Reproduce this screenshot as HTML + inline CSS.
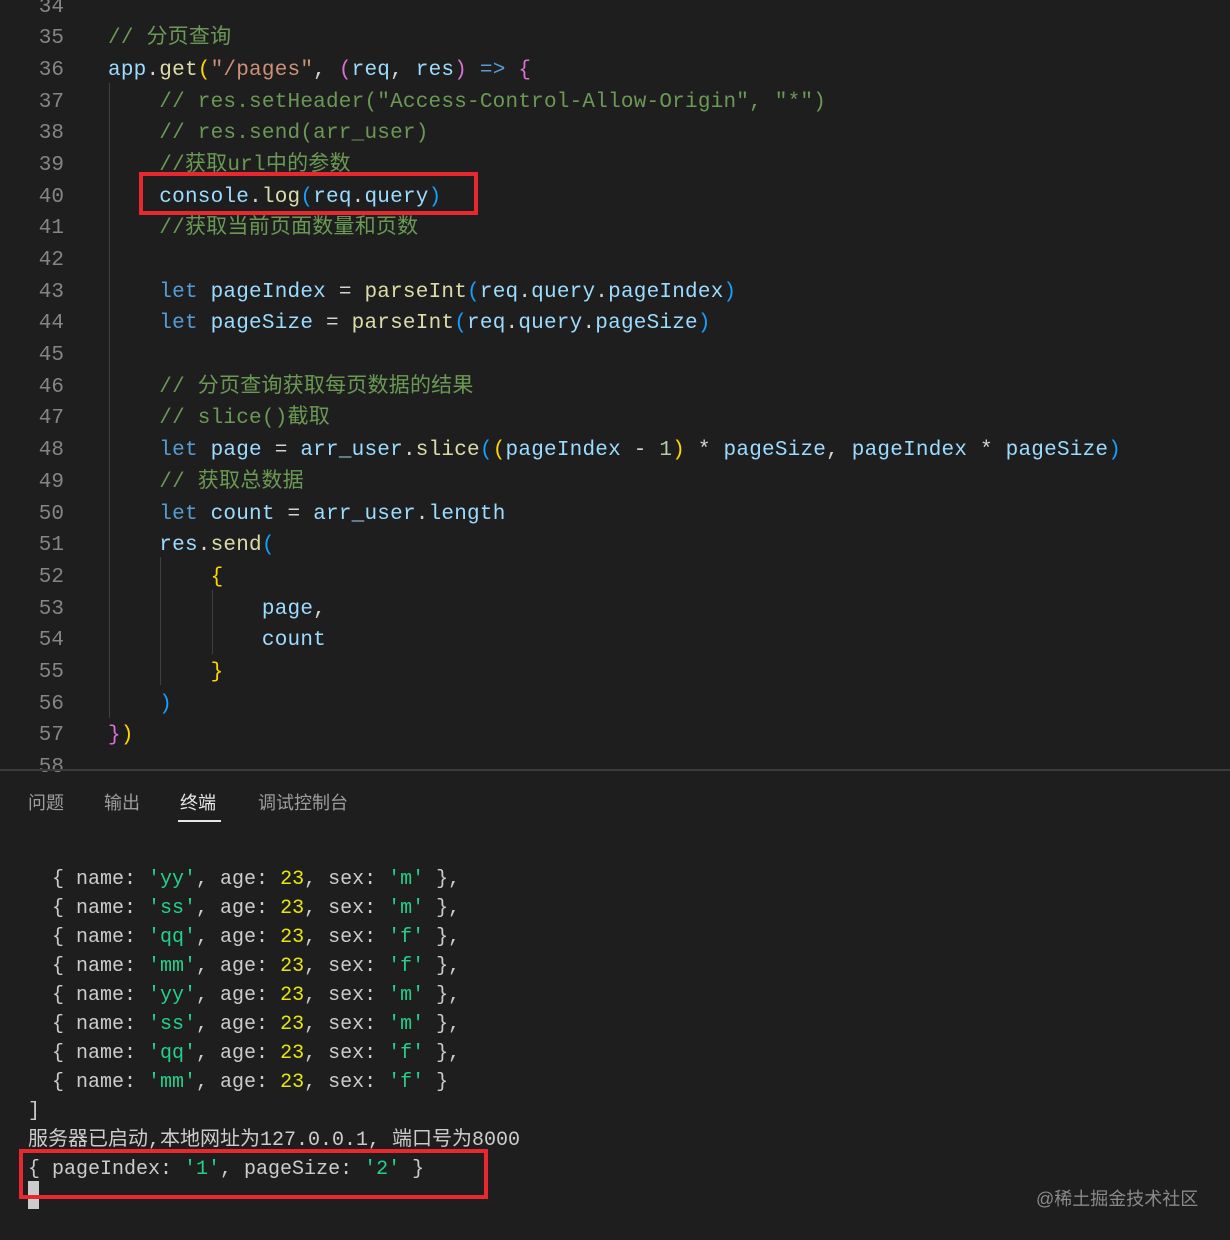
<!DOCTYPE html>
<html><head><meta charset="utf-8"><style>
html,body{margin:0;padding:0;}
body{width:1230px;height:1240px;background:#1e1e1e;position:relative;overflow:hidden;font-family:"Liberation Mono","Noto Sans CJK SC",monospace;}
pre{margin:0;font-family:"Liberation Mono","Noto Sans CJK SC",monospace;}
.ln{position:absolute;left:0;width:64px;top:-8.5px;text-align:right;font-size:21px;line-height:31.68px;color:#858585;}
.code{position:absolute;left:108px;top:-8.5px;font-size:21px;letter-spacing:0.22px;line-height:31.68px;color:#d4d4d4;}
.c{color:#6a9955}.v{color:#9cdcfe}.f{color:#dcdcaa}.s{color:#ce9178}.k{color:#569cd6}.y{color:#ffd700}.p{color:#da70d6}.b{color:#179fff}.n{color:#b5cea8}
.guide{position:absolute;width:1px;background:#404040;}
.sep{position:absolute;left:0;top:769px;width:1230px;height:2px;background:#3c3c3c;}
.tabs{position:absolute;top:789px;font-family:"Liberation Sans","Noto Sans CJK SC",sans-serif;font-size:18px;color:#9d9d9d;}
.term{position:absolute;left:28px;top:864.5px;font-size:20px;line-height:29px;color:#cccccc;}
.g{color:#23d18b}.yy{color:#e5e510}
.box{position:absolute;border:4px solid #e8282e;box-sizing:border-box;}
</style></head><body>
<pre class="ln">34
35
36
37
38
39
40
41
42
43
44
45
46
47
48
49
50
51
52
53
54
55
56
57
58</pre>
<div class="guide" style="left:109px;top:83px;height:635px"></div>
<div class="guide" style="left:160px;top:557px;height:128px"></div>
<div class="guide" style="left:212px;top:590px;height:64px"></div>
<pre class="code">

<span class="c">// 分页查询</span>
<span class="v">app</span>.<span class="f">get</span><span class="y">(</span><span class="s">"/pages"</span>, <span class="p">(</span><span class="v">req</span>, <span class="v">res</span><span class="p">)</span> <span class="k">=&gt;</span> <span class="p">{</span>
    <span class="c">// res.setHeader("Access-Control-Allow-Origin", "*")</span>
    <span class="c">// res.send(arr_user)</span>
    <span class="c">//获取url中的参数</span>
    <span class="v">console</span>.<span class="f">log</span><span class="b">(</span><span class="v">req</span>.<span class="v">query</span><span class="b">)</span>
    <span class="c">//获取当前页面数量和页数</span>

    <span class="k">let</span> <span class="v">pageIndex</span> = <span class="f">parseInt</span><span class="b">(</span><span class="v">req</span>.<span class="v">query</span>.<span class="v">pageIndex</span><span class="b">)</span>
    <span class="k">let</span> <span class="v">pageSize</span> = <span class="f">parseInt</span><span class="b">(</span><span class="v">req</span>.<span class="v">query</span>.<span class="v">pageSize</span><span class="b">)</span>

    <span class="c">// 分页查询获取每页数据的结果</span>
    <span class="c">// slice()截取</span>
    <span class="k">let</span> <span class="v">page</span> = <span class="v">arr_user</span>.<span class="f">slice</span><span class="b">(</span><span class="y">(</span><span class="v">pageIndex</span> - <span class="n">1</span><span class="y">)</span> * <span class="v">pageSize</span>, <span class="v">pageIndex</span> * <span class="v">pageSize</span><span class="b">)</span>
    <span class="c">// 获取总数据</span>
    <span class="k">let</span> <span class="v">count</span> = <span class="v">arr_user</span>.<span class="v">length</span>
    <span class="v">res</span>.<span class="f">send</span><span class="b">(</span>
        <span class="y">{</span>
            <span class="v">page</span>,
            <span class="v">count</span>
        <span class="y">}</span>
    <span class="b">)</span>
<span class="p">}</span><span class="y">)</span>
</pre>
<div class="box" style="left:139px;top:172px;width:339px;height:43px"></div>
<div class="sep"></div>
<div class="tabs" style="left:28px">问题</div>
<div class="tabs" style="left:104px">输出</div>
<div class="tabs" style="left:180px;color:#e7e7e7">终端</div>
<div style="position:absolute;left:178px;top:820px;width:43px;height:2px;background:#e7e7e7"></div>
<div class="tabs" style="left:258px">调试控制台</div>
<pre class="term">  { name: <span class="g">'yy'</span>, age: <span class="yy">23</span>, sex: <span class="g">'m'</span> },
  { name: <span class="g">'ss'</span>, age: <span class="yy">23</span>, sex: <span class="g">'m'</span> },
  { name: <span class="g">'qq'</span>, age: <span class="yy">23</span>, sex: <span class="g">'f'</span> },
  { name: <span class="g">'mm'</span>, age: <span class="yy">23</span>, sex: <span class="g">'f'</span> },
  { name: <span class="g">'yy'</span>, age: <span class="yy">23</span>, sex: <span class="g">'m'</span> },
  { name: <span class="g">'ss'</span>, age: <span class="yy">23</span>, sex: <span class="g">'m'</span> },
  { name: <span class="g">'qq'</span>, age: <span class="yy">23</span>, sex: <span class="g">'f'</span> },
  { name: <span class="g">'mm'</span>, age: <span class="yy">23</span>, sex: <span class="g">'f'</span> }
]
服务器已启动,本地网址为127.0.0.1, 端口号为8000
{ pageIndex: <span class="g">'1'</span>, pageSize: <span class="g">'2'</span> }
</pre>
<div style="position:absolute;left:28px;top:1181px;width:11px;height:28px;background:#cccccc"></div>
<div class="box" style="left:19px;top:1149px;width:469px;height:50px"></div>
<div style="position:absolute;left:1036px;top:1185px;font-family:'Liberation Sans','Noto Sans CJK SC',sans-serif;font-size:18px;color:#8a8a8a">@稀土掘金技术社区</div>
</body></html>
